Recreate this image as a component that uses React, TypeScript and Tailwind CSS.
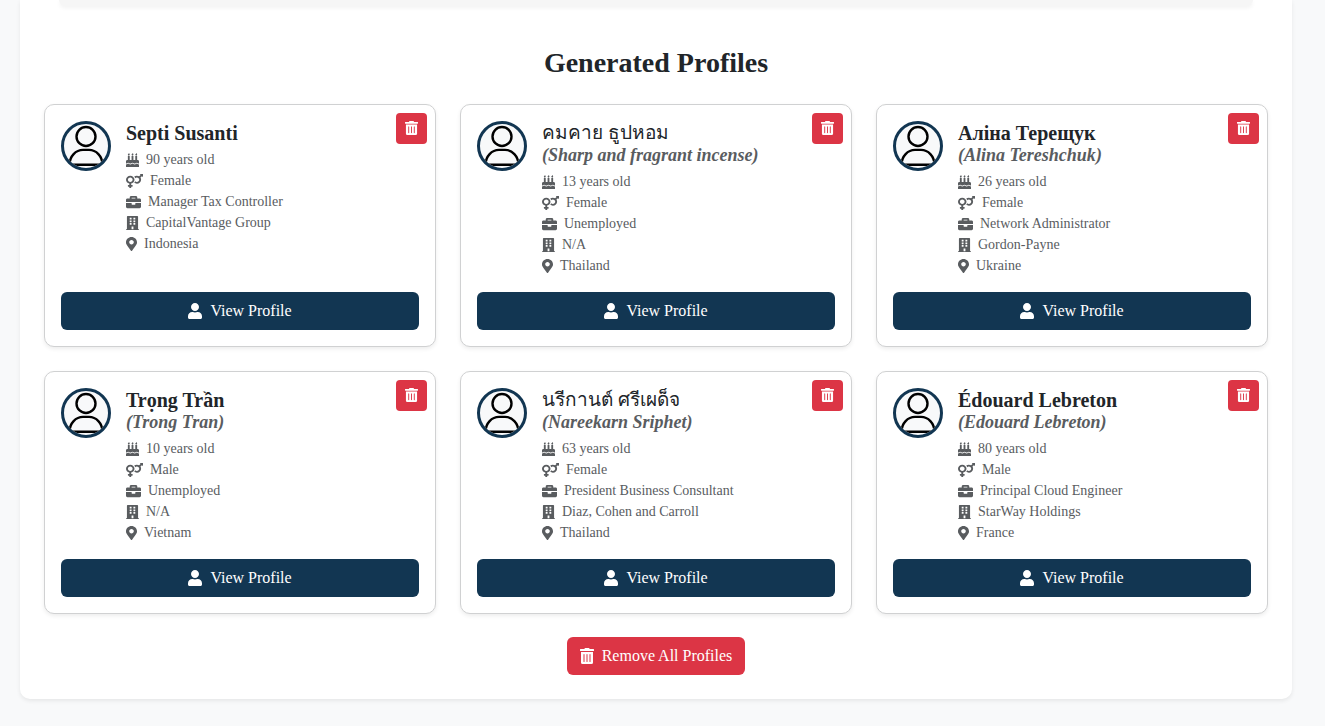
import React from "react";
import {
  FaBirthdayCake,
  FaBriefcase,
  FaBuilding,
  FaMapMarkerAlt,
  FaTrashAlt,
  FaUser,
  FaVenusMars,
} from "react-icons/fa";

type Profile = {
  name: string;
  latin?: string;
  thai?: boolean;
  age: number;
  gender: string;
  job: string;
  company: string;
  country: string;
};

const profiles: Profile[] = [
  { name: "Septi Susanti", age: 90, gender: "Female", job: "Manager Tax Controller", company: "CapitalVantage Group", country: "Indonesia" },
  { name: "คมคาย ธูปหอม", thai: true, latin: "Sharp and fragrant incense", age: 13, gender: "Female", job: "Unemployed", company: "N/A", country: "Thailand" },
  { name: "Аліна Терещук", latin: "Alina Tereshchuk", age: 26, gender: "Female", job: "Network Administrator", company: "Gordon-Payne", country: "Ukraine" },
  { name: "Trọng Trần", latin: "Trong Tran", age: 10, gender: "Male", job: "Unemployed", company: "N/A", country: "Vietnam" },
  { name: "นรีกานต์ ศรีเผด็จ", thai: true, latin: "Nareekarn Sriphet", age: 63, gender: "Female", job: "President Business Consultant", company: "Diaz, Cohen and Carroll", country: "Thailand" },
  { name: "Édouard Lebreton", latin: "Edouard Lebreton", age: 80, gender: "Male", job: "Principal Cloud Engineer", company: "StarWay Holdings", country: "France" },
];

function Avatar() {
  return (
    <div className="size-[50px] shrink-0 overflow-hidden rounded-full border-3 border-[#123652] bg-[#f8f9fa]">
      <svg viewBox="0 0 44 44" className="size-full" fill="none" stroke="#000" strokeWidth="2.4" aria-hidden="true">
        <circle cx="22" cy="12.5" r="9.5" />
        <path d="M5.5 40.8C5.5 32 12 25.9 19 25.9H25C32 25.9 38.5 32 38.5 40.8Z" />
      </svg>
    </div>
  );
}

function Detail({ icon, children }: { icon: React.ReactNode; children: React.ReactNode }) {
  return (
    <li className="flex items-center gap-[7px]">
      {icon}
      <span>{children}</span>
    </li>
  );
}

function ProfileCard({ profile }: { profile: Profile }) {
  return (
    <article className="relative flex flex-col justify-between gap-4 rounded-[10px] border border-[#d0d1d2] bg-white p-4 shadow-[0_2px_4px_rgba(0,0,0,0.075)]">
      <button
        type="button"
        aria-label="Delete profile"
        className="absolute top-2 right-2 flex size-[31px] items-center justify-center rounded bg-[#dc3545] pb-px text-white"
      >
        <FaTrashAlt className="h-3.5 w-[13px]" preserveAspectRatio="none" />
      </button>
      <div className="flex items-start gap-[15px]">
        <Avatar />
        <div>
          <h3 className={profile.thai ? "text-[19px] leading-6 font-normal" : "text-xl leading-6 font-bold"}>
            {profile.name}
          </h3>
          {profile.latin && (
            <p className="mb-1.5 text-lg leading-5 font-bold text-[#595c5f] italic">({profile.latin})</p>
          )}
          <ul className={profile.latin ? "text-sm leading-[21px] text-[#595c5f]" : "mt-1 text-sm leading-[21px] text-[#595c5f]"}>
            <Detail icon={<FaBirthdayCake className="h-3.5 w-[13px] shrink-0" preserveAspectRatio="none" />}>{profile.age} years old</Detail>
            <Detail icon={<FaVenusMars className="h-3.5 w-[17px] shrink-0" preserveAspectRatio="none" />}>{profile.gender}</Detail>
            <Detail icon={<FaBriefcase className="h-3.5 w-[15px] shrink-0" preserveAspectRatio="none" />}>{profile.job}</Detail>
            <Detail icon={<FaBuilding className="h-3.5 w-[13px] shrink-0" preserveAspectRatio="none" />}>{profile.company}</Detail>
            <Detail icon={<FaMapMarkerAlt className="h-3.5 w-[11px] shrink-0" preserveAspectRatio="none" />}>{profile.country}</Detail>
          </ul>
        </div>
      </div>
      <button type="button" className="flex h-[38px] w-full items-center justify-center gap-2 rounded-md bg-[#123652] text-base text-white">
        <FaUser className="h-4 w-3.5" aria-hidden="true" />
        View Profile
      </button>
    </article>
  );
}

export default function App() {
  return (
    <div className="min-h-screen bg-[#f8f9fa] pr-[33px] pb-7 pl-5 font-['Liberation_Serif',serif] text-[#212529]">
      <main className="rounded-b-[10px] bg-white px-6 pb-6 shadow-[0_2px_4px_rgba(0,0,0,0.075)]">
        <div className="mx-[15px] h-[6px] rounded-b-[10px] bg-[#f6f6f6] shadow-[0_2px_4px_rgba(0,0,0,0.05)]" />
        <h2 className="pt-10 pb-[25px] text-center text-[28px] leading-[33px] font-bold">Generated Profiles</h2>
        <div className="grid grid-cols-3 gap-6">
          {profiles.map((profile) => (
            <ProfileCard key={profile.name} profile={profile} />
          ))}
        </div>
        <div className="flex justify-center pt-[23px]">
          <button type="button" className="flex h-[38px] items-center gap-2 rounded-md bg-[#dc3545] px-[13px] text-base text-white">
            <FaTrashAlt className="h-4 w-3.5" aria-hidden="true" />
            Remove All Profiles
          </button>
        </div>
      </main>
    </div>
  );
}
